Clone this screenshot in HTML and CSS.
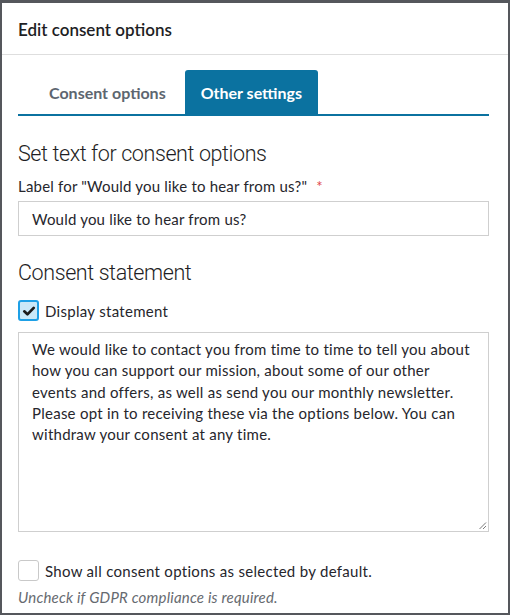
FILE: index.html
```html
<!DOCTYPE html>
<html>
<head>
<meta charset="utf-8">
<link rel="stylesheet" href="styles.css">
</head>
<body>
<div class="dialog">
  <div class="dialog-header">Edit consent options</div>
  <div class="dialog-body">
    <div class="tabs">
      <div class="tab">Consent options</div>
      <div class="tab active">Other settings</div>
    </div>
    <h2 class="section-title first">Set text for consent options</h2>
    <label class="field-label">Label for "Would you like to hear from us?" <span class="req">*</span></label>
    <div class="input">Would you like to hear from us?</div>
    <h2 class="section-title second">Consent statement</h2>
    <div class="check-row">
      <span class="checkbox checked">
        <svg viewBox="0 0 16 16" width="14" height="14"><path d="M2.6 8.4 L6.2 11.8 L13.4 4.4" fill="none" stroke="#1b1b1b" stroke-width="3.1" stroke-linecap="round" stroke-linejoin="round"/></svg>
      </span>
      <span class="check-label">Display statement</span>
    </div>
    <div class="textarea">We would like to contact you from time to time to tell you about<br>how you can support our mission, about some of our other<br>events and offers, as well as send you our monthly newsletter.<br>Please opt in to receiving these via the options below. You can<br>withdraw your consent at any time.
      <svg class="grip" viewBox="0 0 10 10" width="10" height="10"><path d="M9 2.5 L2.5 9 M9 6 L6 9" stroke="#7a7a7a" stroke-width="1"/></svg>
    </div>
    <div class="check-row bottom">
      <span class="checkbox"></span>
      <span class="check-label">Show all consent options as selected by default.</span>
    </div>
    <div class="hint">Uncheck if GDPR compliance is required.</div>
  </div>
</div>
</body>
</html>
```
FILE: styles.css
```css
html, body {
  margin: 0;
  padding: 0;
  background: #fff;
}
body {
  font-family: Lato, "Open Sans", sans-serif;
  color: #1e1e24;
}
.dialog {
  width: 510px;
  height: 615px;
  box-sizing: border-box;
  border: 2px solid #55575c;
  border-top-width: 3px;
  background: #fff;
  overflow: hidden;
}
.dialog-header {
  height: 52px;
  box-sizing: border-box;
  padding: 17px 16px 0;
  font-size: 17px;
  line-height: 20px;
  font-weight: 600;
  color: #1e1e24;
  border-bottom: 1px solid #dedede;
}
.dialog-body {
  padding: 15px 19px 0 16px;
}
.tabs {
  display: flex;
  gap: 3px;
  padding-left: 15px;
  border-bottom: 2px solid #0b72a0;
  height: 44px;
}
.tab {
  padding: 1px 16px 0;
  display: flex;
  align-items: center;
  font-size: 16px;
  font-weight: 700;
  color: #5d6670;
  border-radius: 3px 3px 0 0;
}
.tab.active {
  background: #0b72a0;
  color: #fff;
}
.section-title {
  font-family: Roboto, "Open Sans", sans-serif;
  font-weight: 300;
  font-size: 21.5px;
  letter-spacing: -0.4px;
  line-height: 30px;
  margin: 0;
  color: #1e1e24;
}
.section-title.first {
  margin-top: 23px;
}
.section-title.second {
  margin-top: 22px;
}
.field-label {
  display: block;
  font-size: 15px;
  margin-top: 7px;
  line-height: 20px;
  color: #26262c;
  letter-spacing: 0.2px;
}
.req {
  color: #e0454a;
  margin-left: 5px;
}
.input {
  margin-top: 5px;
  height: 35px;
  box-sizing: border-box;
  border: 1px solid #cfcfcf;
  padding: 0 13px;
  display: flex;
  align-items: center;
  font-size: 15px;
  letter-spacing: 0.2px;
  color: #26262c;
}
.check-row {
  display: flex;
  align-items: center;
  gap: 6px;
  margin-top: 12px;
  height: 21px;
}
.check-row.bottom {
  margin-top: 28px;
}
.checkbox {
  width: 21px;
  height: 21px;
  box-sizing: border-box;
  border: 1px solid #c9c9c9;
  border-radius: 3px;
  display: flex;
  align-items: center;
  justify-content: center;
  background: #fff;
  flex: none;
}
.checkbox.checked {
  border: 2px solid #1ea0e6;
  background: #c9e8f8;
}
.check-label {
  font-size: 15px;
  color: #26262c;
  letter-spacing: 0.3px;
}
.textarea {
  position: relative;
  margin-top: 11px;
  height: 200px;
  box-sizing: border-box;
  border: 1px solid #cfcfcf;
  padding: 6px 4px 6px 13px;
  font-size: 15px;
  letter-spacing: 0.25px;
  line-height: 21.3px;
  color: #26262c;
  white-space: nowrap;
  overflow: hidden;
}
.grip {
  position: absolute;
  right: 1px;
  bottom: 1px;
}
.hint {
  margin-top: 6px;
  font-size: 15px;
  line-height: 20px;
  font-style: italic;
  color: #666a70;
  letter-spacing: 0.2px;
}
```
